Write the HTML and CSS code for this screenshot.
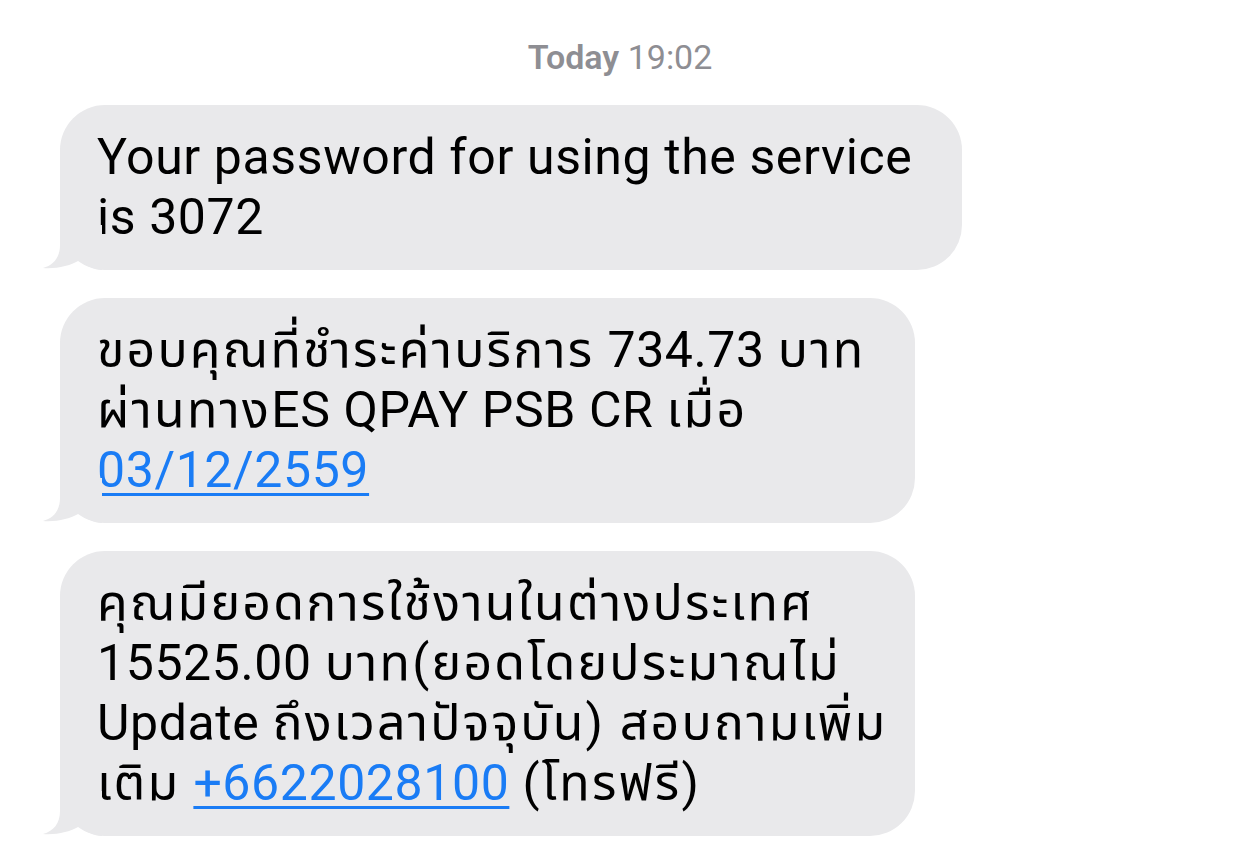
FILE: index.html
```html
<!DOCTYPE html>
<html lang="en">
<head>
    <meta charset="UTF-8">
    <meta name="viewport" content="width=device-width, initial-scale=1.0">
    <title>Messages</title>
    <link rel="stylesheet" href="styles.css">
</head>
<body>

<div class="thread">
    <div class="timestamp"><b>Today</b> 19:02</div>

    <div class="bubble">
        Your password for using the service<br>is 3072
        <svg class="tail" width="60" height="45" viewBox="0 0 60 45"><path d="M18 0 L18 20 C18 32 12 40 1 43 C14 44 28 41 38 35 C44 40 52 45 60 45 L60 0 Z"/></svg>
    </div>

    <div class="bubble">
        <span class="th">ขอบคุณที่ชำระค่าบริการ</span> 734.73 <span class="th">บาท</span><br><span class="th">ผ่านทาง</span>ES QPAY PSB CR <span class="th">เมื่อ</span><br><a href="#">03/12/2559</a>
        <svg class="tail" width="60" height="45" viewBox="0 0 60 45"><path d="M18 0 L18 20 C18 32 12 40 1 43 C14 44 28 41 38 35 C44 40 52 45 60 45 L60 0 Z"/></svg>
    </div>

    <div class="bubble bubble-tight">
        <span class="th">คุณมียอดการใช้งานในต่างประเทศ</span><br>15525.00 <span class="th">บาท(ยอดโดยประมาณไม่</span><br>Update <span class="th">ถึงเวลาปัจจุบัน) สอบถามเพิ่ม</span><br><span class="th">เติม</span> <a href="#">+6622028100</a> <span class="th">(โทรฟรี)</span>
        <svg class="tail" width="60" height="45" viewBox="0 0 60 45"><path d="M18 0 L18 20 C18 32 12 40 1 43 C14 44 28 41 38 35 C44 40 52 45 60 45 L60 0 Z"/></svg>
    </div>
</div>

</body>
</html>
```

FILE: styles.css
```css
body {
    margin: 0;
    background: #fff;
    font-family: Roboto, "Noto Sans Thai", "Noto Sans", sans-serif;
    color: #000;
}
.thread {
    padding: 38px 0 0 60px;
    display: flex;
    flex-direction: column;
    align-items: flex-start;
}
.timestamp {
    align-self: center;
    margin-left: -56px;
    font-size: 34px;
    line-height: 38px;
    color: #8e8e93;
    margin-bottom: 29px;
}
.timestamp b {
    font-weight: 600;
}
.bubble {
    position: relative;
    background: #e9e9eb;
    border-radius: 45px;
    padding: 22px 50px 23px 37px;
    font-size: 50px;
    line-height: 60px;
    letter-spacing: 0.6px;
    white-space: nowrap;
    margin-bottom: 28px;
}
.bubble-tight {
    padding-right: 28px;
}
.th {
    letter-spacing: 2.2px;
}
.bubble a {
    color: #1a7cf5;
    text-decoration: underline;
    text-decoration-thickness: 3px;
    text-underline-offset: 6px;
}
.tail {
    position: absolute;
    left: -18px;
    bottom: 0;
    fill: #e9e9eb;
}
```
